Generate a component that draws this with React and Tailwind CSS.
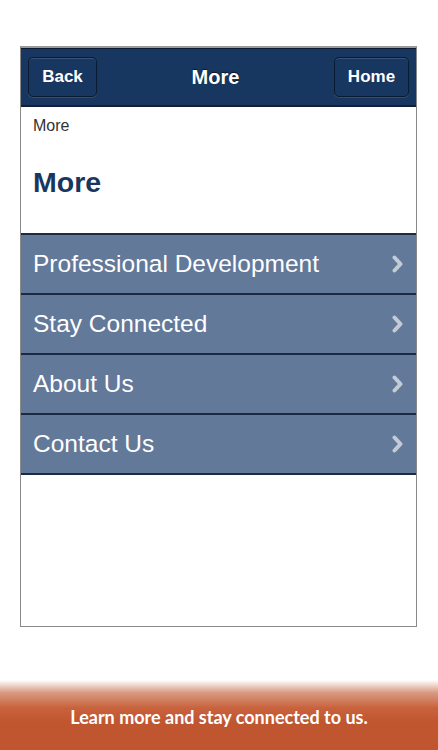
import React from "react";

const items = ["Professional Development", "Stay Connected", "About Us", "Contact Us"];

const Chevron = () => (
  <svg width="11" height="18" viewBox="0 0 11 18" className="shrink-0">
    <path d="M2.5 2.5 L8.5 9 L2.5 15.5" fill="none" stroke="#c3cbd6" strokeWidth="4" strokeLinecap="round" strokeLinejoin="round" />
  </svg>
);

const NavButton = ({ children, className = "" }) => (
  <button
    className={`h-[40px] rounded-[5px] border border-[#0a1a30] bg-[#173660] shadow-[inset_0_1px_0_rgba(255,255,255,0.15),0_1px_0_rgba(255,255,255,0.12)] text-white text-[17px] font-bold ${className}`}
  >
    {children}
  </button>
);

export default function App() {
  return (
    <div className="relative w-[438px] h-[750px] bg-white overflow-hidden" style={{ fontFamily: '"Liberation Sans", Arial, sans-serif' }}>
      <div className="pt-[46px] pl-[20px]">
        <div className="w-[397px] h-[581px] border-x border-b border-t-2 border-x-[#8a8a8a] border-b-[#8a8a8a] border-t-[#9a9a9a] flex flex-col">
          {/* Header */}
          <header className="h-[59px] bg-[#173660] border-t border-b-2 border-t-[#0b1a2e] border-b-[#101f36] flex items-center justify-between px-[7px]">
            <NavButton className="w-[69px]">Back</NavButton>
            <h1 className="text-white text-[20px] font-bold [text-shadow:0_-1px_1px_rgba(0,0,0,0.6)]">More</h1>
            <NavButton className="w-[75px]">Home</NavButton>
          </header>

          {/* Page title */}
          <div className="h-[126px] px-[12px] pt-[7px]">
            <p className="text-[16px] text-[#333]">More</p>
            <h2 className="mt-[23px] text-[28.5px] font-bold text-[#173660]">More</h2>
          </div>

          {/* List */}
          <ul>
            {items.map((item) => (
              <li key={item} className="h-[60px] bg-[#62799a] border-t-2 border-[#1c2b41] flex items-center justify-between pl-[12px] pr-[13px]">
                <span className="text-white text-[24.5px]">{item}</span>
                <Chevron />
              </li>
            ))}
          </ul>
          <div className="border-t-2 border-[#1c2b41] flex-1 bg-white" />
        </div>
      </div>

      {/* Footer */}
      <footer className="absolute bottom-0 left-0 right-0 h-[70px] bg-[linear-gradient(to_bottom,#ffffff_0%,#d99a82_18%,#c8623d_40%,#bf5630_60%,#bf5630_100%)] flex items-center justify-center pt-[5px]">
        <p className="text-white text-[18px] font-bold" style={{ fontFamily: 'Lato, sans-serif' }}>
          Learn more and stay connected to us.
        </p>
      </footer>
    </div>
  );
}
